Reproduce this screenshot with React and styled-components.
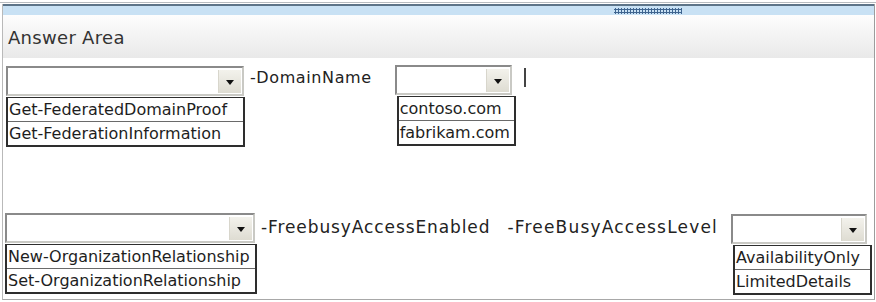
import React from "react";
import styled, { createGlobalStyle } from "styled-components";

const Global = createGlobalStyle`
  html, body { margin: 0; padding: 0; background: #fff; }
  body { font-family: "DejaVu Sans", Verdana, sans-serif; }
`;

const Page = styled.div`
  width: 876px;
  height: 302px;
  box-sizing: border-box;
  padding-top: 2px;
  background: #fff;
`;

const TopRule = styled.div`
  height: 1px;
  background: #b8bcc0;
  margin-bottom: 1px;
`;

const Frame = styled.div`
  margin: 0 1px 0 2px;
  height: 296px;
  box-sizing: border-box;
  border-left: 1px solid #b9b9b9;
  border-right: 1px solid #9c9c9c;
  border-bottom: 1px solid #a8a8a8;
  display: flex;
  flex-direction: column;
`;

const TitleBar = styled.div`
  height: 2px;
  background: #5d7488;
`;

const Band = styled.div`
  height: 9px;
  background: #c8e1f4;
  display: flex;
  justify-content: flex-start;
  padding-left: 611px;
  align-items: center;
`;

const Grip = styled.div`
  width: 68px;
  height: 6px;
  background-image: radial-gradient(circle, #3f6590 1px, transparent 1.2px);
  background-size: 3px 3px;
`;

const Header = styled.div`
  height: 43px;
  background: linear-gradient(#fdfdfd, #e9e9e9);
  display: flex;
  align-items: center;
  padding-left: 5px;
  font-family: "DejaVu Sans", sans-serif;
  font-size: 18px;
  letter-spacing: 0.3px;
  color: #333;
  padding-top: 1px;
  box-sizing: border-box;
`;

const Content = styled.div`
  flex: 1;
  display: flex;
  flex-direction: column;
  padding-top: 7px;
`;

const Row = styled.div`
  display: flex;
  align-items: flex-start;
  margin-top: ${(p) => p.$top || 0}px;
  padding-left: ${(p) => p.$left || 0}px;
`;

const Group = styled.div`
  display: flex;
  flex-direction: column;
  margin-left: ${(p) => p.$ml || 0}px;
  margin-top: ${(p) => p.$mt || 0}px;
`;

const Select = styled.div`
  width: ${(p) => p.$w}px;
  height: 30px;
  box-sizing: border-box;
  border-top: 2px solid #8a8a8a;
  border-left: 2px solid #8a8a8a;
  border-right: 2px solid #c9c9c4;
  border-bottom: 2px solid #c9c9c4;
  background: #fff;
  display: flex;
  justify-content: flex-end;
  align-items: flex-end;
  padding: 0 1px 1px 0;
`;

const ArrowBtn = styled.div`
  width: 22px;
  height: 23px;
  background: linear-gradient(#f3f2ec, #dedcd2);
  border-left: 1px solid #d8d6cc;
  display: flex;
  align-items: center;
  justify-content: center;
`;

const Tri = styled.div`
  width: 0;
  height: 0;
  border-left: 4px solid transparent;
  border-right: 4px solid transparent;
  border-top: 5px solid #111;
  margin-top: 2px;
`;

const List = styled.div`
  width: ${(p) => p.$w}px;
  margin-left: ${(p) => p.$ml || 0}px;
  margin-top: 1px;
  box-sizing: border-box;
  border: 2px solid #2e2e2e;
  border-top-width: 1px;
  background: #fff;
`;

const Item = styled.div`
  height: 23px;
  line-height: 23px;
  padding-left: 1px;
  font-family: "DejaVu Sans", sans-serif;
  font-size: 16px;
  color: #1e1e1e;
  white-space: nowrap;
  & + & {
    border-top: 1px solid #6a6a6a;
  }
`;

const Label = styled.div`
  margin-left: ${(p) => p.$ml || 0}px;
  margin-top: ${(p) => p.$mt || 0}px;
  font-family: "DejaVu Sans", sans-serif;
  font-size: ${(p) => p.$size || 16}px;
  letter-spacing: ${(p) => p.$ls || 0.6}px;
  color: #222;
  white-space: nowrap;
`;

const Cursor = styled.div`
  margin-left: 8px;
  margin-top: 3px;
  width: 2px;
  height: 19px;
  background: #444;
`;

function Drop({ w, lw, lml, items, ml, mt }) {
  return (
    <Group $ml={ml} $mt={mt}>
      <Select $w={w}>
        <ArrowBtn>
          <Tri />
        </ArrowBtn>
      </Select>
      <List $w={lw} $ml={lml}>
        {items.map((t) => (
          <Item key={t}>{t}</Item>
        ))}
      </List>
    </Group>
  );
}

export default function App() {
  return (
    <>
      <Global />
      <Page>
        <TopRule />
        <Frame>
          <TitleBar />
          <Band>
            <Grip />
          </Band>
          <Header>Answer Area</Header>
          <Content>
            <Row $left={3}>
              <Drop
                mt={1}
                w={238}
                lw={239}
                items={["Get-FederatedDomainProof", "Get-FederationInformation"]}
              />
              <Label $ml={5} $mt={3}>-DomainName</Label>
              <Drop
                ml={23}
                w={117}
                lw={119}
                lml={2}
                items={["contoso.com", "fabrikam.com"]}
              />
              <Cursor />
            </Row>
            <Row $left={2} $top={66}>
              <Drop
                w={250}
                lw={252}
                items={["New-OrganizationRelationship", "Set-OrganizationRelationship"]}
              />
              <Label $ml={4} $mt={4} $size={17} $ls={0.9}>
                -FreebusyAccessEnabled
              </Label>
              <Label $ml={17} $mt={4} $size={17} $ls={1.2}>
                -FreeBusyAccessLevel
              </Label>
              <Drop
                ml={13}
                mt={1}
                w={136}
                lw={139}
                lml={2}
                items={["AvailabilityOnly", "LimitedDetails"]}
              />
            </Row>
          </Content>
        </Frame>
      </Page>
    </>
  );
}
